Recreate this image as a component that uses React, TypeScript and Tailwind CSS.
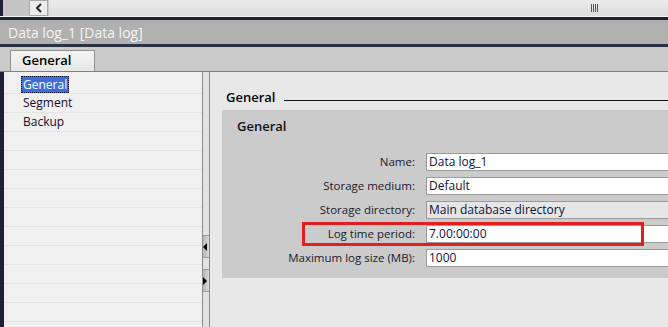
import React from "react";

const font = { fontFamily: '"Open Sans", "Noto Sans", sans-serif' };

function Row({ label, value, disabled }: { label: string; value: string; disabled?: boolean }) {
  return (
    <div className="flex items-center h-[24px]">
      <div className="w-[204px] shrink-0 text-right text-[11.5px] text-[#1a1a2a] pr-[11px] leading-none">{label}</div>
      <div
        className={`flex-1 h-[18px] border-t border-b border-l border-[#9a9a9a] flex items-center pl-[2px] text-[12px] leading-none text-[#10103a] ${
          disabled ? "bg-[#e6e6e6]" : "bg-white"
        }`}
      >
        {value}
      </div>
    </div>
  );
}

export default function App() {
  const navLines = Array.from({ length: 13 });
  return (
    <div className="w-[668px] h-[327px] overflow-hidden relative bg-[#e8e8e8] flex flex-col" style={font}>
      {/* top scroll row */}
      <div className="h-[16px] flex shrink-0">
        <div className="w-[3px] bg-[#1c2130]" />
        <div className="w-[26px] bg-[#c4c4c4]" />
        <div className="w-[19px] h-[16px] bg-[#ececec] border border-[#a8a8a8] flex items-center justify-center">
          <svg width="8" height="10" viewBox="0 0 8 10">
            <path d="M6 1 L2 5 L6 9" stroke="#222" strokeWidth="2" fill="none" />
          </svg>
        </div>
        <div className="flex-1 bg-gradient-to-b from-[#ebebeb] to-[#dcdcdc] border-l border-[#c8c8c8] relative">
          <div className="absolute left-[542px] top-[4px] flex gap-[1px]">
            <div className="w-[1px] h-[8px] bg-[#555]" />
            <div className="w-[1px] h-[8px] bg-[#555]" />
            <div className="w-[1px] h-[8px] bg-[#555]" />
            <div className="w-[1px] h-[8px] bg-[#555]" />
          </div>
        </div>
      </div>
      <div className="h-[1px] bg-[#f4f4f4] shrink-0" />
      <div className="h-[3px] bg-[#1e2434] shrink-0" />
      {/* title bar */}
      <div className="h-[24px] bg-[#b0b0b0] flex items-center pl-[8px] text-[14px] text-[#f6f6f6] shrink-0">
        Data log_1 [Data log]
      </div>
      <div className="h-[3px] bg-[#2b3246] shrink-0" />
      {/* tab strip */}
      <div className="h-[25px] bg-[#cacaca] border-b border-[#808080] flex items-end pl-[10px] shrink-0">
        <div className="w-[85px] h-[21px] bg-gradient-to-b from-[#f4f4f4] to-[#e6e6e6] border-t border-l border-r border-[#909090] flex items-center pl-[11px] text-[13px] font-semibold text-black">
          General
        </div>
      </div>
      {/* main */}
      <div className="flex flex-1 min-h-0">
        <div className="w-[4px] bg-[#1c2130] shrink-0" />
        {/* nav */}
        <div className="w-[198px] bg-[#f0f0f0] pt-[3px] shrink-0 flex flex-col">
          {navLines.map((_, i) => (
            <div key={i} className="h-[19px] border-b border-[#e4e4e4] flex items-center pl-[17px] text-[12px] text-[#1a0a2a] shrink-0">
              {i === 0 && (
                <span className="bg-[#3d6fd6] text-white border border-dotted border-[#101030] px-[1px] leading-[15px]">General</span>
              )}
              {i === 1 && <span className="pl-[2px]">Segment</span>}
              {i === 2 && <span className="pl-[2px]">Backup</span>}
            </div>
          ))}
        </div>
        {/* splitter */}
        <div className="w-[8px] bg-[#e2e2e2] border-l border-r border-[#8c8c8c] shrink-0 flex flex-col">
          <div className="h-[163px]" />
          <div className="h-[23px] bg-gradient-to-r from-[#b8b8b8] to-[#d8d8d8] border-t border-b border-[#9a9a9a] flex items-center">
            <svg width="4" height="8" viewBox="0 0 4 8">
              <path d="M4 0 L0 4 L4 8 Z" fill="#000" />
            </svg>
          </div>
          <div className="h-[11px]" />
          <div className="h-[23px] bg-gradient-to-r from-[#b8b8b8] to-[#d8d8d8] border-t border-b border-[#9a9a9a] flex items-center">
            <svg width="4" height="8" viewBox="0 0 4 8">
              <path d="M0 0 L4 4 L0 8 Z" fill="#000" />
            </svg>
          </div>
        </div>
        {/* content */}
        <div className="flex-1 bg-[#e8e8e8] pl-[12px] pt-[14px] flex flex-col">
          <div className="h-[24px] flex items-center pl-[4px]">
            <span className="text-[13px] font-semibold text-black">General</span>
            <div className="flex-1 h-[1px] bg-[#111] ml-[9px] mt-[5px]" />
          </div>
          <div className="h-[168px] bg-[#cbcbcb] pt-[7px] mt-0">
            <div className="pl-[15px] h-[20px] flex items-center text-[13px] font-semibold text-[#111]">General</div>
            <div className="h-[13px]" />
            <Row label="Name:" value="Data log_1" />
            <Row label="Storage medium:" value="Default" />
            <Row label="Storage directory:" value="Main database directory" disabled />
            <Row label="Log time period:" value="7.00:00:00" />
            <Row label="Maximum log size (MB):" value="1000" />
          </div>
        </div>
      </div>
      {/* highlight box */}
      <div className="absolute left-[302px] top-[222px] w-[342px] h-[24px] border-[3px] border-[#e21f1f]" />
    </div>
  );
}
